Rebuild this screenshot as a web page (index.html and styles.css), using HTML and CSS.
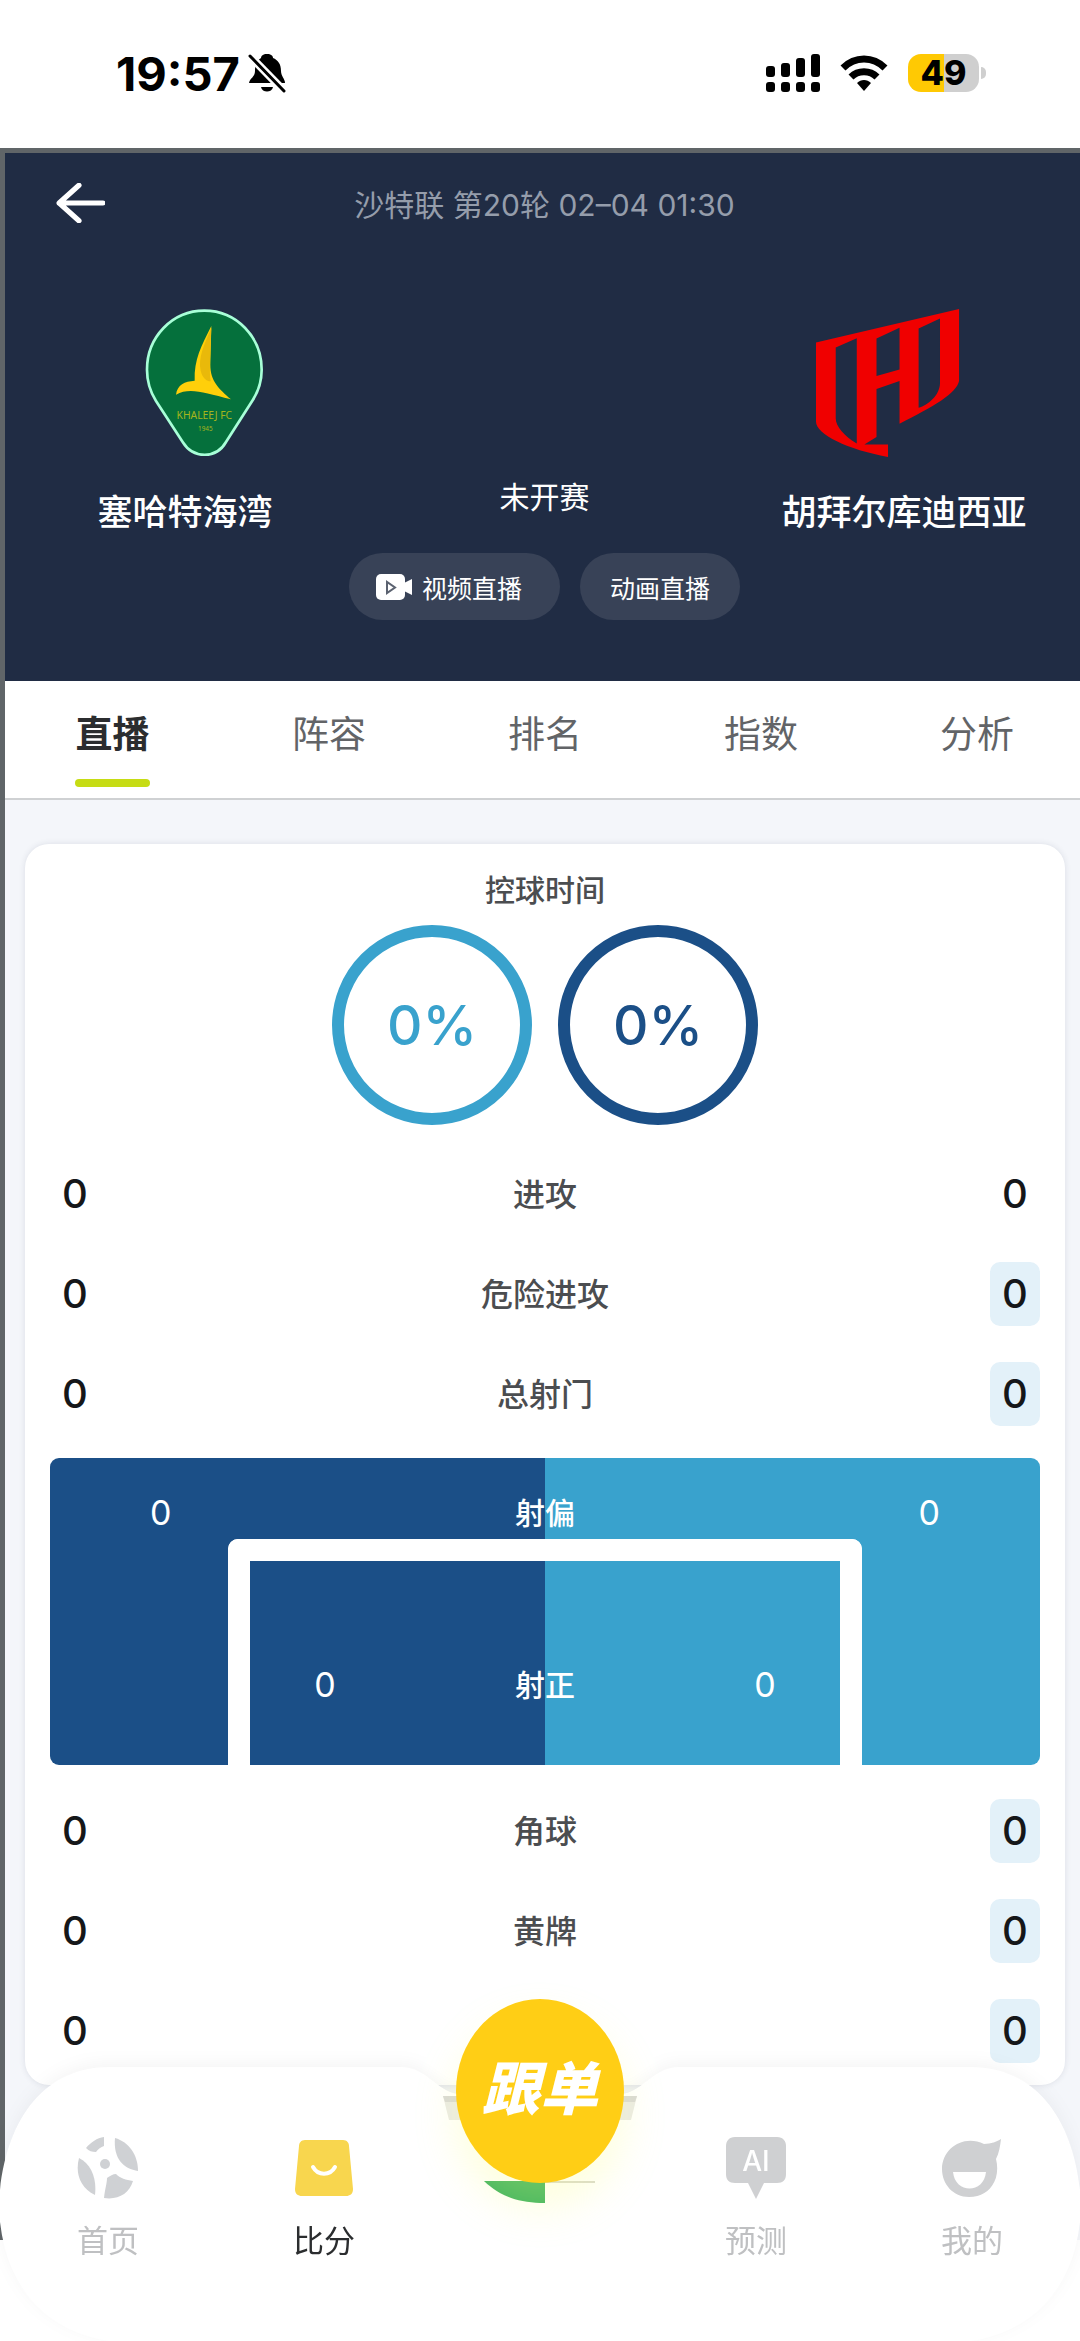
FILE: index.html
```html
<!DOCTYPE html>
<html lang="zh-CN">
<head>
    <meta charset="UTF-8">
    <meta name="viewport" content="width=device-width, initial-scale=1.0">
    <title>塞哈特海湾 - 胡拜尔库迪西亚</title>
    <link rel="stylesheet" href="styles.css">
</head>
<body>

    <div class="status-bar">
        <div class="status-left">
            <span class="time">19:57</span>
            <svg class="bell" viewBox="0 0 38 40">
                <path d="M19 1c-4 0-6 2-6 4C8 8 7 13 7 18c0 6-5 7-6 12h36c0-4-4-7-4-12 0-7-3-11-8-13 0-2-2-4-6-4z"/>
                <path d="M13 34h12c-1 6-11 6-12 0z"/>
                <path d="M2 3l34 35" stroke="#fff" stroke-width="8"/>
                <path d="M2 3l34 35" stroke="#000" stroke-width="3" stroke-linecap="round"/>
            </svg>
        </div>
        <div class="status-right">
            <svg class="signal" viewBox="0 0 54 38">
                <rect x="0" y="12" width="9" height="11" rx="3"/>
                <rect x="15" y="9" width="9" height="14" rx="3"/>
                <rect x="30" y="4" width="9" height="19" rx="3"/>
                <rect x="45" y="0" width="9" height="23" rx="3"/>
                <rect x="0" y="28" width="9" height="10" rx="3"/>
                <rect x="15" y="28" width="9" height="10" rx="3"/>
                <rect x="30" y="28" width="9" height="10" rx="3"/>
                <rect x="45" y="28" width="9" height="10" rx="3"/>
            </svg>
            <svg class="wifi" viewBox="0 0 48 36">
                <path d="M3 13C15 1 33 1 45 13" fill="none" stroke="#000" stroke-width="7"/>
                <path d="M11 22c7-7 19-7 26 0" fill="none" stroke="#000" stroke-width="7"/>
                <path d="M17 28c4-4 10-4 14 0l-7 8z"/>
            </svg>
            <div class="battery"><span>49</span></div>
        </div>
    </div>

    <main class="match">
        <header class="match-header">
            <div class="top-bar">
                <button class="back" aria-label="返回">
                    <svg viewBox="0 0 48 38">
                        <path d="M23 2L4 19l19 17M4 19h42" fill="none" stroke="#fff" stroke-width="5" stroke-linecap="round" stroke-linejoin="round"/>
                    </svg>
                </button>
                <h1>沙特联 第20轮 02–04 01:30</h1>
            </div>

            <div class="teams">
                <div class="team home">
                    <svg class="logo" viewBox="0 0 360 450">
                        <path d="M178 8C275 8 350 88 350 185c0 35-10 65-27 92l-80 125c-28 50-98 52-130 0L33 279C15 250 6 220 6 185 6 88 81 8 178 8z" fill="#05703c" stroke="#a8ffd8" stroke-width="8"/>
                        <path d="M199 54c-30 60-52 100-50 164-30 2-52 12-56 42 40-22 80-8 165 14-36-32-62-54-62-104z" fill="#ffcf0a"/>
                        <path d="M199 60c-22 50-40 90-32 128 5 22 18 32 30 32-4-25-2-60-1-90z" fill="#e9b90a"/>
                        <text x="178" y="332" class="badge-name">KHALEEJ FC</text>
                        <text x="181" y="370" class="badge-year">1945</text>
                    </svg>
                    <span class="team-name">塞哈特海湾</span>
                </div>

                <div class="match-state">
                    <p>未开赛</p>
                    <div class="live-buttons">
                        <button class="live-btn">
                            <svg viewBox="0 0 36 26">
                                <rect x="0" y="0" width="29" height="26" rx="5" fill="#fff"/>
                                <path d="M28 9l8-4v16l-8-4z" fill="#fff"/>
                                <path d="M11 8v11l8-5.500z" fill="none" stroke="#5b6270" stroke-width="2"/>
                            </svg>
                            视频直播
                        </button>
                        <button class="live-btn">动画直播</button>
                    </div>
                </div>

                <div class="team away">
                    <svg class="logo" viewBox="0 0 442 456">
                        <path fill="#f00000" fill-rule="evenodd" d="M3 105L438 3v219c-8 38-78 78-181 130V222l-70 24v146l-37 23h72v38C100 430 3 385 3 345zM63 120v215c0 25 27 55 64 77V92zM187 93v114l70-20V60zM315 62v241c30-8 63-38 65-73V32z"/>
                    </svg>
                    <span class="team-name">胡拜尔库迪西亚</span>
                </div>
            </div>
        </header>

        <nav class="tabs">
            <a href="#live" class="active">直播</a>
            <a href="#lineup">阵容</a>
            <a href="#rank">排名</a>
            <a href="#odds">指数</a>
            <a href="#analysis">分析</a>
        </nav>

        <section class="card">
            <h2>控球时间</h2>
            <div class="possession">
                <div class="ring light">0%</div>
                <div class="ring dark">0%</div>
            </div>

            <table class="stats">
                <tbody>
                    <tr>
                        <td><span>0</span></td>
                        <th scope="row">进攻</th>
                        <td><span>0</span></td>
                    </tr>
                    <tr>
                        <td><span>0</span></td>
                        <th scope="row">危险进攻</th>
                        <td><span class="lead">0</span></td>
                    </tr>
                    <tr>
                        <td><span>0</span></td>
                        <th scope="row">总射门</th>
                        <td><span class="lead">0</span></td>
                    </tr>
                </tbody>
            </table>

            <div class="goal">
                <div class="goal-row">
                    <span class="num">0</span>
                    <span>射偏</span>
                    <span class="num">0</span>
                </div>
                <div class="goal-frame">
                    <div class="goal-row">
                        <span class="num">0</span>
                        <span>射正</span>
                        <span class="num">0</span>
                    </div>
                </div>
            </div>

            <table class="stats">
                <tbody>
                    <tr>
                        <td><span>0</span></td>
                        <th scope="row">角球</th>
                        <td><span class="lead">0</span></td>
                    </tr>
                    <tr>
                        <td><span>0</span></td>
                        <th scope="row">黄牌</th>
                        <td><span class="lead">0</span></td>
                    </tr>
                    <tr>
                        <td><span>0</span></td>
                        <th scope="row"></th>
                        <td><span class="lead">0</span></td>
                    </tr>
                </tbody>
            </table>
        </section>
    </main>

    <nav class="bottom-nav">
        <!-- bar background with the dip in the middle -->
        <svg class="nav-shape" viewBox="0 0 1080 274" preserveAspectRatio="none">
            <path d="M0 123C8 50 45 0 110 0h290c30 0 36 28 66 28h148c30 0 36-28 66-28h290c65 0 102 50 110 123v32c-8 70-50 110-110 119H110C50 265 8 225 0 155z" fill="#fff"/>
        </svg>

        <a href="#home">
            <svg viewBox="0 0 62 62" fill="#cfd1d4">
                <path d="M27 0v9c-3 1-6 3-8 6-4 0-7-1-10-4C14 5 20 1 27 0z"/>
                <path d="M38 1C52 5 61 18 61 34 47 32 36 22 38 1z"/>
                <path d="M2 21c12 6 18 20 16 37C3 51-2 36 2 21z"/>
                <circle cx="28" cy="27" r="5"/>
                <path d="M27 61c1-9 3-15 3-20 3-2 6-4 9-4 4 4 10 6 17 7-4 13-15 19-29 17z"/>
            </svg>
            首页
        </a>
        <a href="#score" class="active">
            <svg viewBox="0 0 62 62">
                <path d="M12 3h38c4 0 6 3 6 6l4 43c0 5-3 7-7 7H9c-4 0-7-2-7-7L6 9c0-3 2-6 6-6z" fill="#f8d64e"/>
                <path d="M20 30c5 9 17 9 22 0" fill="none" stroke="#fff" stroke-width="4" stroke-linecap="round"/>
            </svg>
            比分
        </a>
        <div class="nav-center">
            <svg class="ribbon" viewBox="0 0 194 110">
                <path d="M0 0h194l-6 24H6z" fill="#ebebe6"/>
                <path d="M0 0h194l-2 6H2z" fill="#d9d9d6"/>
                <path d="M41 85h61v22c-26 0-44-6-61-22z" fill="#3db35f"/>
                <path d="M102 86h50" stroke="#dadacf" stroke-width="2"/>
            </svg>
            <a href="#follow" class="follow">跟单</a>
        </div>
        <a href="#predict">
            <svg viewBox="0 0 62 62">
                <path d="M10 0h42c6 0 9 4 9 9v28c0 6-3 9-9 9H39l-8 16-8-16H10c-6 0-9-3-9-9V9c0-5 3-9 9-9z" fill="#cfd0d2"/>
                <text x="31" y="34" class="ai-text">AI</text>
            </svg>
            预测
        </a>
        <a href="#mine">
            <svg viewBox="0 0 62 62">
                <path d="M43 7c6 0 12-2 17-5-1 8-2 14-5 20 5 20-6 38-27 38C12 60 1 47 1 32 1 11 23-3 43 7z" fill="#cfd0d2"/>
                <path d="M12 35h33c-2 22-31 22-33 0z" fill="#fff"/>
            </svg>
            我的
        </a>
    </nav>

</body>
</html>
```
FILE: styles.css
```css
:root {
    --navy: #202c44;
    --dark-blue: #1b4f87;
    --light-blue: #39a2cd;
    --accent: #c6dc14;
    --yellow: #ffce15;
    --page-bg: #f4f6fa;
    --edge: #606568;
}

* {
    box-sizing: border-box;
}

body {
    margin: 0;
    min-height: 100vh;
    background-color: #fff;
    font-family: Inter, "Noto Sans CJK SC", sans-serif;
    color: #3c3f43;
}

a {
    text-decoration: none;
    color: inherit;
}

button {
    border: none;
    font-family: inherit;
    color: #fff;
    cursor: pointer;
}

/* 状态栏 */
.status-bar {
    display: flex;
    justify-content: space-between;
    align-items: center;
    height: 148px;
    padding: 0 101px 2px 116px;
    color: #000;
}

.status-left,
.status-right {
    display: flex;
    align-items: center;
}

.status-left {
    gap: 8px;
}

.status-right {
    gap: 20px;
}

.time {
    font-size: 47px;
    font-weight: 700;
}

.bell {
    width: 38px;
    height: 40px;
}

.signal {
    width: 54px;
    height: 38px;
}

.wifi {
    width: 48px;
    height: 36px;
}

.battery {
    position: relative;
    width: 71px;
    height: 38px;
    border-radius: 13px;
    background: linear-gradient(90deg, #ffc903 50%, #cfcfcf 50%);
    font-size: 34px;
    font-weight: 800;
    line-height: 38px;
    text-align: center;
}

.battery::after {
    content: "";
    position: absolute;
    right: -7px;
    top: 13px;
    width: 5px;
    height: 12px;
    border-radius: 0 5px 5px 0;
    background-color: #cfcfcf;
}

/* 比赛头部 */
.match {
    padding-bottom: 155px;
    border-top: 5px solid var(--edge);
    border-left: 5px solid var(--edge);
    background-color: var(--page-bg);
}

.match-header {
    background-color: var(--navy);
    color: #fff;
}

.top-bar {
    display: grid;
    grid-template-columns: 110px 1fr 106px;
    align-items: center;
    height: 100px;
}

.back {
    display: flex;
    padding: 0 0 0 50px;
    background: none;
}

.back svg {
    width: 50px;
    height: 40px;
}

.top-bar h1 {
    margin: 0;
    text-align: center;
    font-size: 30px;
    font-weight: 400;
    color: #959dab;
}

.teams {
    display: grid;
    grid-template-columns: 1fr auto 1fr;
    padding: 55px 12px 61px 16px;
}

.team {
    display: flex;
    flex-direction: column;
    align-items: center;
    gap: 32px;
}

.logo {
    height: 150px;
}

.home .logo {
    margin-left: 40px;
}

.away .logo {
    margin-right: 32px;
}

.badge-name {
    font-family: "Noto Sans", sans-serif;
    font-size: 31px;
    text-anchor: middle;
    fill: #a5b51c;
}

.badge-year {
    font-family: "Noto Sans", sans-serif;
    font-size: 19px;
    text-anchor: middle;
    fill: #a5b51c;
}

.team-name {
    font-size: 35px;
    font-weight: 500;
    line-height: 44px;
    white-space: nowrap;
}

.match-state {
    display: flex;
    flex-direction: column;
    align-items: center;
    gap: 34px;
    padding-top: 167px;
}

.match-state p {
    margin: 0;
    font-size: 30px;
    line-height: 44px;
}

.live-buttons {
    display: flex;
    gap: 20px;
}

.live-btn {
    display: flex;
    align-items: center;
    gap: 10px;
    height: 67px;
    padding: 0 30px;
    border-radius: 34px;
    background-color: #384257;
    font-size: 25px;
}

.live-btn svg {
    width: 36px;
    height: 26px;
}

.live-btn:first-child {
    padding: 0 38px 0 27px;
}

/* 标签页 */
.tabs {
    display: flex;
    justify-content: space-between;
    height: 119px;
    padding: 0 66px 0 70px;
    border-bottom: 2px solid #cfd1d3;
    background-color: #fff;
}

.tabs a {
    display: flex;
    flex-direction: column;
    align-items: center;
    gap: 18px;
    padding-top: 28px;
    font-size: 37px;
    line-height: 52px;
    color: #626467;
}

.tabs .active {
    font-weight: 700;
    color: #2b2d2f;
}

.tabs .active::after {
    content: "";
    width: 75px;
    height: 8px;
    border-radius: 4px;
    background-color: var(--accent);
}

/* 技术统计 */
.card {
    margin: 44px 15px 0 20px;
    padding: 24px 25px 4px;
    border-radius: 24px;
    background-color: #fff;
    box-shadow: 0 0 6px rgba(40, 50, 80, 0.12);
}

.card h2 {
    margin: 0 0 13px;
    text-align: center;
    font-size: 30px;
    font-weight: 500;
    line-height: 44px;
    color: #4b4d50;
}

.possession {
    display: flex;
    justify-content: center;
    gap: 26px;
    margin-bottom: 19px;
}

.ring {
    width: 200px;
    height: 200px;
    border: 12px solid currentColor;
    border-radius: 50%;
    text-align: center;
    font-size: 55px;
    font-weight: 500;
    line-height: 176px;
}

.light {
    color: var(--light-blue);
}

.dark {
    color: var(--dark-blue);
}

.stats {
    width: 100%;
    border-collapse: collapse;
}

.stats td,
.stats th {
    height: 100px;
    padding: 0;
}

.stats th {
    padding-bottom: 4px;
    font-size: 32px;
    font-weight: 500;
    color: #4b4d50;
}

.stats td {
    width: 50px;
}

.stats span {
    display: block;
    border-radius: 10px;
    text-align: center;
    font-size: 40px;
    font-weight: 500;
    line-height: 64px;
    color: #151719;
}

.stats .lead {
    background-color: #e3f1f9;
}

.goal {
    display: flex;
    flex-direction: column;
    height: 307px;
    margin: 14px 0 16px;
    border-radius: 9px;
    background: linear-gradient(90deg, var(--dark-blue) 50%, var(--light-blue) 50%);
    color: #fff;
    font-size: 30px;
    font-weight: 500;
}

.goal-row {
    display: flex;
    justify-content: space-between;
    align-items: center;
    padding: 30px 100px 0;
    line-height: 50px;
}

.num {
    font-size: 34px;
    font-weight: 400;
}

.goal-frame {
    flex: 1;
    width: 64%;
    margin: 1px auto 0;
    border: 22px solid #fff;
    border-bottom: none;
    border-radius: 10px 10px 0 0;
}

.goal-frame .goal-row {
    padding: 99px 64px 0;
}

/* 底部导航 */
.bottom-nav {
    position: fixed;
    left: 0;
    right: 0;
    bottom: 0;
    display: grid;
    grid-template-columns: repeat(5, 1fr);
    height: 274px;
    padding-top: 70px;
    font-size: 31px;
    line-height: 44px;
    color: #bfc0c2;
}

.bottom-nav > a {
    position: relative;
    display: flex;
    flex-direction: column;
    align-items: center;
    gap: 20px;
}

.bottom-nav > a svg {
    width: 62px;
    height: 62px;
}

.bottom-nav .active {
    color: #2b2d2f;
}

.nav-shape {
    position: absolute;
    top: 0;
    left: 0;
    width: 100%;
    height: 100%;
    filter: drop-shadow(0 -4px 8px rgba(0, 0, 0, 0.04));
}

.nav-center {
    position: relative;
    display: flex;
    justify-content: center;
}

.ribbon {
    position: absolute;
    top: -41px;
    width: 194px;
    height: 110px;
}

.follow {
    position: absolute;
    top: -138px;
    width: 168px;
    height: 184px;
    border-radius: 50%;
    background-color: var(--yellow);
    box-shadow: 0 24px 40px rgba(250, 255, 120, 0.25);
    color: #fff;
    font-size: 58px;
    font-style: italic;
    font-weight: 900;
    line-height: 180px;
    text-align: center;
}

.ai-text {
    font-size: 28px;
    font-weight: 500;
    text-anchor: middle;
    fill: #fff;
}
```
